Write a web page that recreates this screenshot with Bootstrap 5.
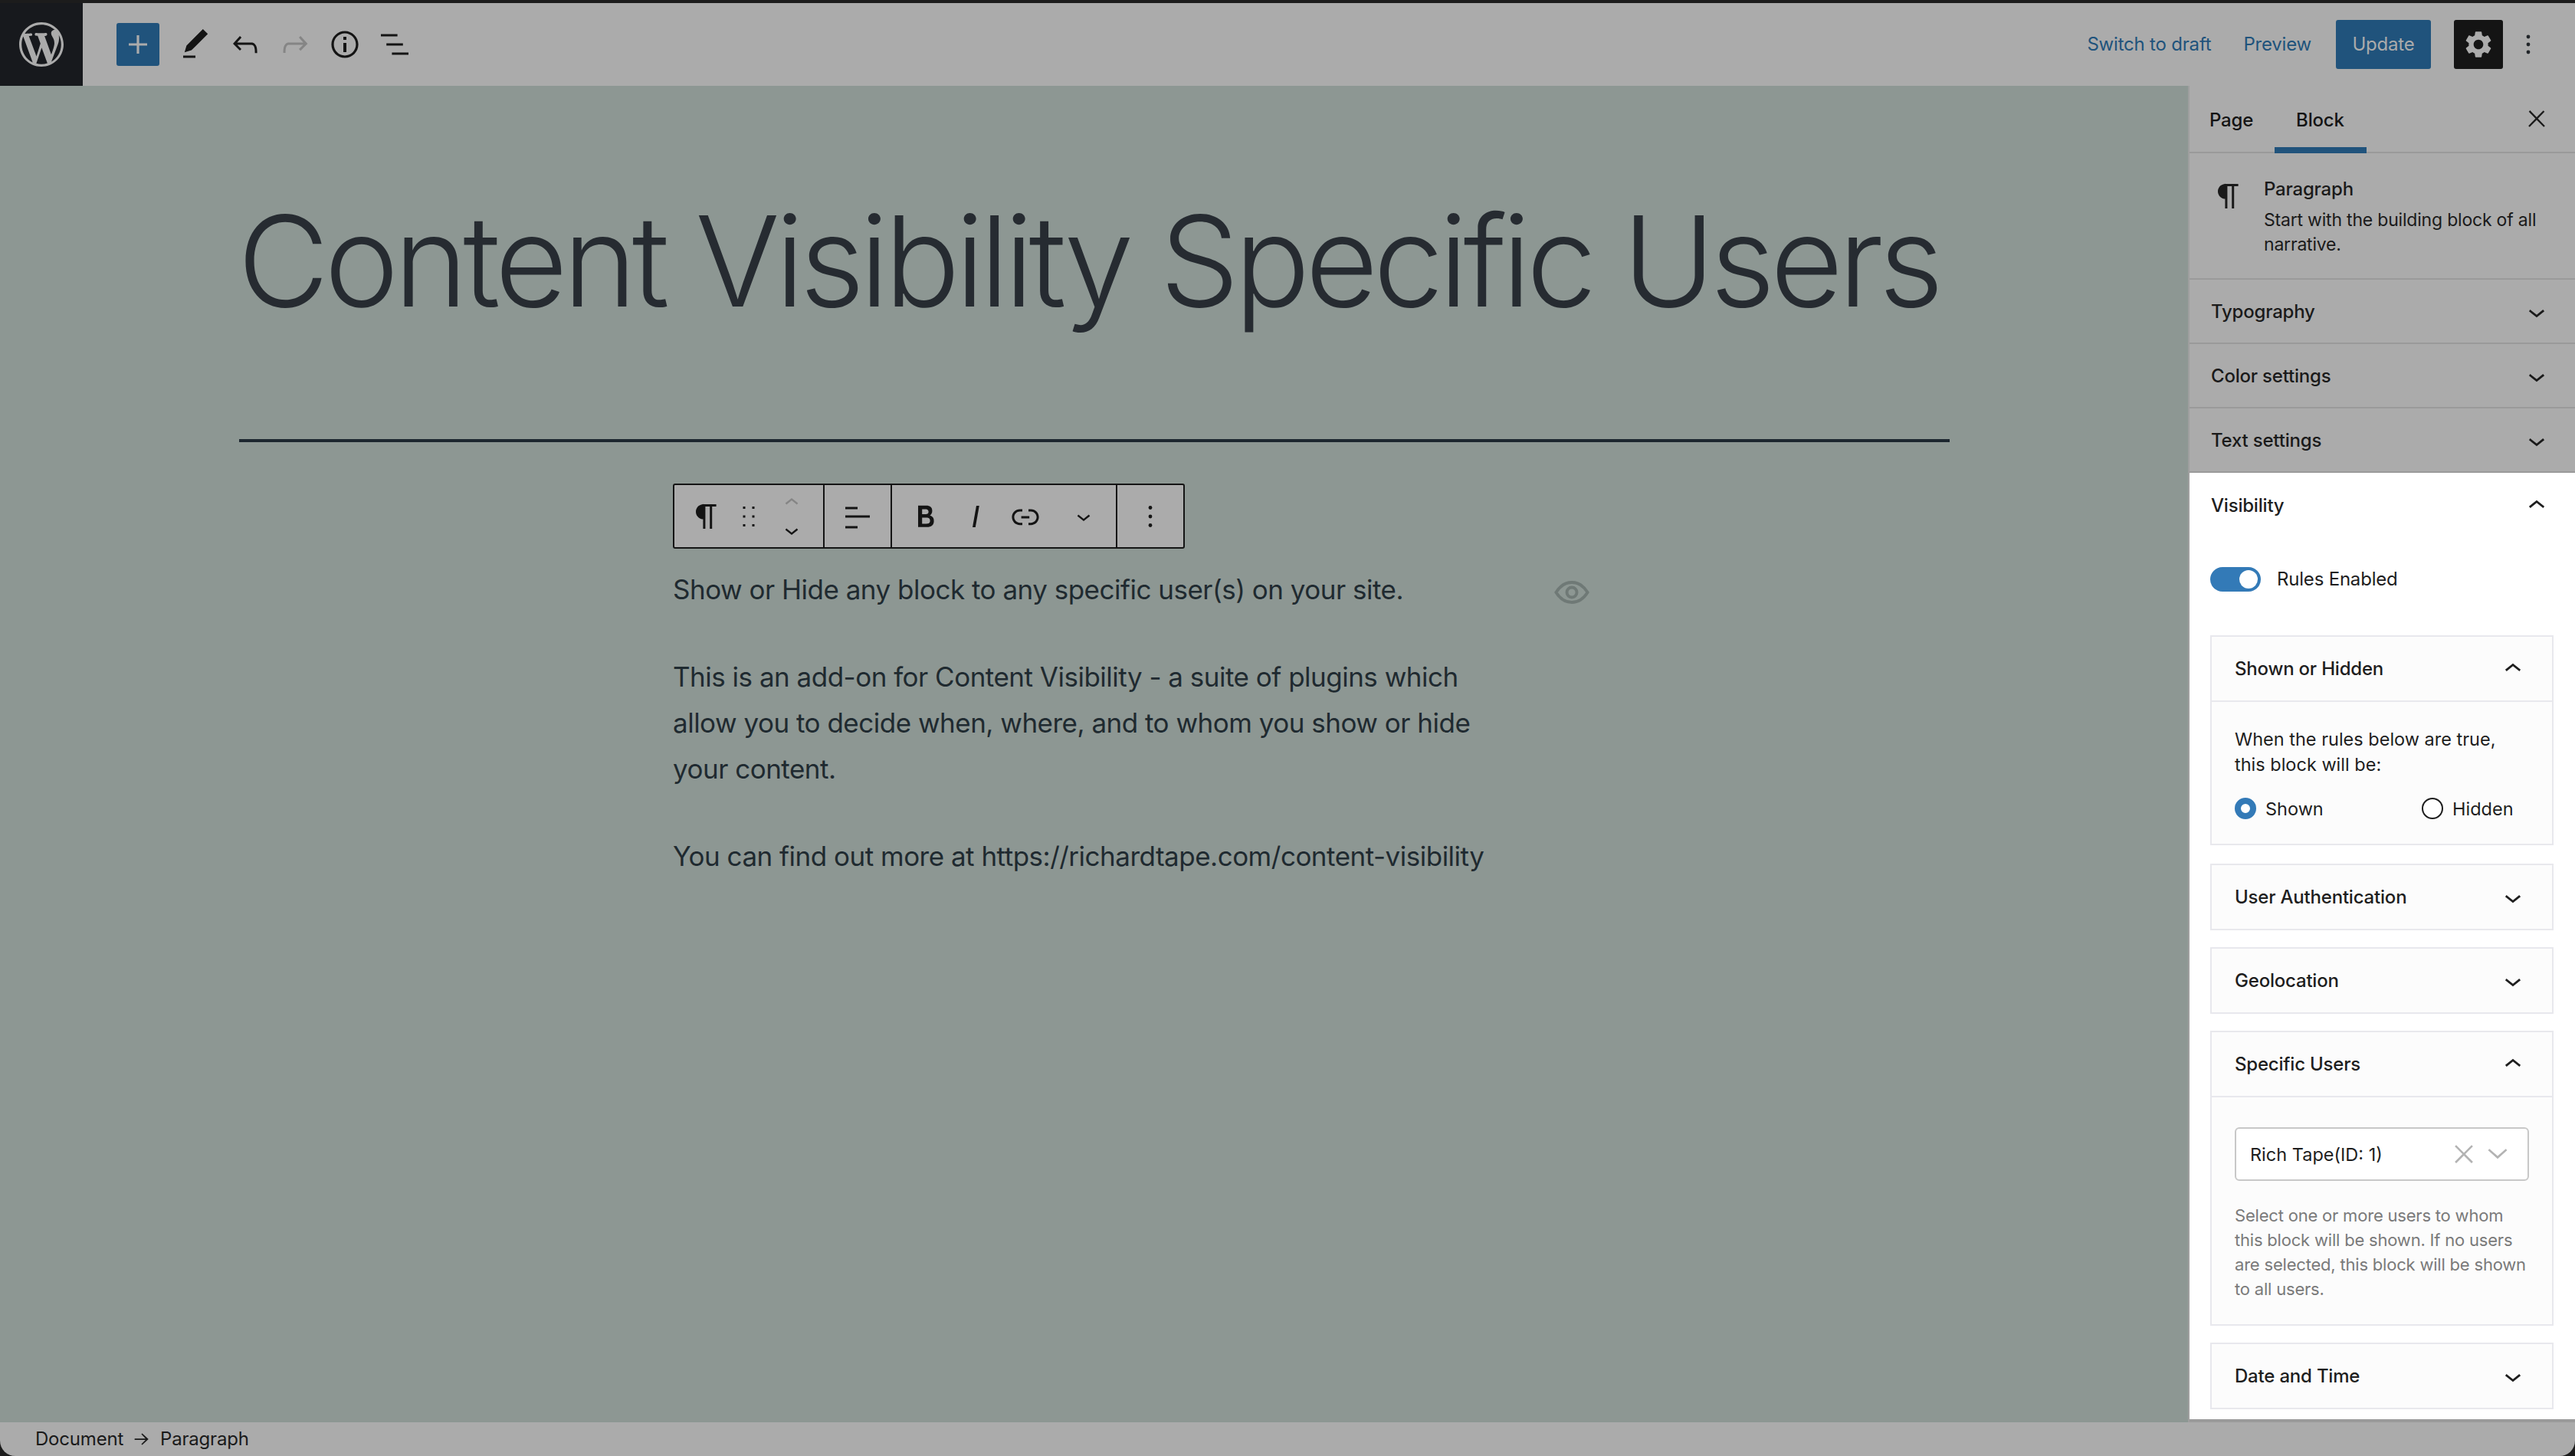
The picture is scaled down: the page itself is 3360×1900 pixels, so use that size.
<!DOCTYPE html>
<html lang="en">
<head>
  <meta charset="UTF-8">
  <meta name="viewport" content="width=device-width, initial-scale=1.0">
  <title>Content Visibility Specific Users</title>
  <link href="https://cdn.jsdelivr.net/npm/bootstrap@5.3.0/dist/css/bootstrap.min.css" rel="stylesheet">
  <style>
    html, body { height: 100%; }
    body { background: #000; font-family: Inter, "Liberation Sans", sans-serif; color: #1a1a1a; overflow: hidden; }
    svg { fill: currentColor; display: block; flex: none; }

    .wp-frame { height: 1900px; padding-top: 4px; background: #1c1c1c; }
    .wp-shell { height: 1896px; background: #ababab; border-radius: 0 0 20px 20px; overflow: hidden; }

    .wp-topbar { height: 108px; background: #ababab; }
    .wp-logo { width: 108px; height: 108px; background: #17191d; color: #ababab; }
    .wp-tools { padding-left: 44px; gap: 9px; color: #141414; }
    .wp-tool { width: 56px; height: 56px; }
    .wp-tool.off { color: #858585; }
    .wp-inserter { background: #20537c; color: #ababab; border-radius: 3px; margin-right: 10px; }
    .wp-actions { padding-right: 37px; font-size: 24px; letter-spacing: -.2px; }
    .wp-link { color: #20537c; text-decoration: none; margin-right: 42px; }
    .wp-link:last-of-type { margin-right: 32px; }
    .wp-update { background: #20537c; color: #ababab; border: 0; border-radius: 3px; font-size: 24px; letter-spacing: -.2px; width: 124px; height: 64px; padding: 0; margin-right: 30px; }
    .wp-update:hover { background: #20537c; color: #ababab; }
    .wp-cog { width: 64px; height: 64px; background: #141414; color: #ababab; border-radius: 3px; margin-right: 9px; }

    .wp-body { height: 1744px; }
    .wp-canvas { background: #8d9793; position: relative; padding-top: 147px; }
    .wp-title { margin: 0 0 0 310px; font-size: 164px; line-height: 1; font-weight: 300; color: #262b31; letter-spacing: -6.25px; white-space: nowrap; }
    .wp-sep { margin: 150px 0 0 312px; width: 2232px; height: 4px; background: #1d2730; opacity: 1; border: 0; }
    .wp-column { margin: 54px 0 0 878px; width: 1100px; }

    .wp-bar { width: 668px; height: 85px; background: #ababab; border: 2px solid #141414; border-radius: 3px; color: #141414; }
    .wp-group { height: 100%; border-right: 2px solid #141414; }
    .wp-group:last-child { border-right: 0; }
    .wp-mover { color: #141414; line-height: 0; }
    .wp-mover .off { color: #858585; }

    .wp-copy { font-size: 35px; letter-spacing: -.5px; line-height: 60px; color: #1f2a30; position: relative; margin-top: 23px; }
    .wp-copy p { margin: 0 0 54px; }
    .wp-eye { position: absolute; left: 1147px; top: 8px; color: #6f7976; }

    .wp-side { width: 505px; flex: none; border-left: 2px solid #9f9f9f; background: #ababab; height: 1744px; overflow: hidden; letter-spacing: -.2px; }
    .wp-tabs { height: 88px; border-bottom: 2px solid #9a9a9a; padding-left: 26px; padding-right: 37px; font-size: 24px; font-weight: 500; }
    .wp-tab { height: 86px; color: #141414; padding: 4px 0 0; text-decoration: none; margin-right: 56px; position: relative; line-height: 1; }
    .wp-tab.on::after { content: ""; position: absolute; left: -28px; right: -29px; bottom: -2px; height: 8px; background: #20537c; }
    .wp-blockcard { height: 165px; padding: 32px 20px 0 27px; border-bottom: 2px solid #9a9a9a; font-size: 23px; line-height: 32px; }
    .wp-blockcard > svg { margin-right: 22px; }
    .wp-blockcard h2 { font-size: 24px; font-weight: 500; margin: 0 0 9px; line-height: 30px; }
    .wp-blockcard p { margin: 0; }
    .wp-row { height: 84px; padding: 2px 28px 0 28px; border-bottom: 2px solid #9a9a9a; font-size: 24px; font-weight: 500; }

    .wp-panel { background: #fff; padding-bottom: 13px; border-bottom: 6px solid #9a9a9a; }
    .wp-panelhead { height: 86px; padding: 0 28px 0 28px; font-size: 24px; font-weight: 500; color: #1e1e1e; }
    .wp-rule { padding: 0 0 0 27px; margin-top: 36px; height: 34px; font-size: 24px; color: #1e1e1e; }
    .form-switch .wp-toggle { width: 66px; height: 32px; margin: 0; background-color: #337ab7; border: 0; }
    .wp-rule label { margin-left: 21px; }
    .wp-boxes { padding: 0 28px 0 27px; margin-top: 56px; }
    .wp-box { border: 2px solid #e8e8ed; background: #fcfcfc; border-radius: 0; margin-bottom: 22px; }
    .wp-box.first { margin-bottom: 24px; }
    .wp-box:last-child { margin-bottom: 0; }
    .wp-boxhead { height: 83px; padding: 0 29px 0 30px; font-size: 24px; font-weight: 500; color: #1e1e1e; }
    .wp-boxhead.open { height: 85px; border-bottom: 2px solid #e8e8ed; }
    .wp-boxbody { padding: 32px 30px 0; font-size: 23.5px; letter-spacing: 0; line-height: 33px; color: #1e1e1e; }
    .wp-boxbody p { margin: 0; }
    .wp-boxbody .wp-rulenote { max-width: 350px; }
    .wp-radios { margin-top: 27px; height: 60px; }
    .wp-radios > div { height: 28px; gap: 12px; }
    .wp-radio { width: 28px; height: 28px; margin: 0; border: 2px solid #1e1e1e; background: #fff; }
    .wp-radio:checked { background: #fff; border: 8px solid #337ab7; }
    .wp-select { height: 70px; border: 2px solid #c8c8c8; border-radius: 6px; background: #fff; padding: 0 24px 0 18px; margin-top: 7px; color: #1e1e1e; }
    .wp-boxbody .wp-help { color: #7a7a7a; font-size: 22px; letter-spacing: -.2px; line-height: 32px; margin-top: 29px; padding-bottom: 30px; }
    .wp-selicons { color: #b3b3b3; gap: 14px; }

    .wp-foot { height: 44px; padding-left: 46px; font-size: 24px; letter-spacing: -.2px; color: #1a1a1a; gap: 10px; }
  </style>
</head>
<body>
  <div class="wp-frame">
    <div class="wp-shell d-flex flex-column">

      <!-- top bar -->
      <header class="wp-topbar d-flex align-items-center justify-content-between">
        <div class="d-flex align-items-center">
          <a class="wp-logo d-flex align-items-center justify-content-center">
            <svg width="58" height="58" viewBox="0 0 20 20"><path d="M20 10c0-5.51-4.49-10-10-10C4.48 0 0 4.49 0 10c0 5.52 4.48 10 10 10 5.51 0 10-4.48 10-10zM7.78 15.37L4.37 6.22c.55-.02 1.17-.08 1.17-.08.5-.06.44-1.13-.06-1.11 0 0-1.45.11-2.37.11-.18 0-.37 0-.58-.01C4.12 2.69 6.87 1.11 10 1.11c2.33 0 4.45.87 6.05 2.34-.68-.11-1.65.39-1.65 1.58 0 .74.45 1.36.9 2.1.35.61.55 1.36.55 2.46 0 1.49-1.4 5-1.4 5l-3.03-8.37c.54-.02.82-.17.82-.17.5-.05.44-1.25-.06-1.22 0 0-1.44.12-2.38.12-.87 0-2.33-.12-2.33-.12-.5-.03-.56 1.2-.06 1.22l.92.08 1.26 3.41zM17.41 10c.24-.64.74-1.87.43-4.25.7 1.29 1.05 2.71 1.05 4.25 0 3.29-1.73 6.24-4.4 7.78.97-2.59 1.94-5.2 2.92-7.78zM6.1 18.09C3.12 16.65 1.11 13.53 1.11 10c0-1.3.23-2.48.72-3.59C3.25 10.3 4.67 14.2 6.1 18.09zm4.03-6.63l2.58 6.98c-.86.29-1.76.45-2.71.45-.79 0-1.57-.11-2.29-.33.81-2.38 1.62-4.74 2.42-7.1z"/></svg>
          </a>
          <div class="wp-tools d-flex align-items-center">
            <span class="wp-tool wp-inserter d-flex align-items-center justify-content-center"><svg width="48" height="48" viewBox="0 0 24 24"><path d="M18 11.2h-5.2V6h-1.6v5.2H6v1.6h5.2V18h1.6v-5.2H18z"/></svg></span>
            <span class="wp-tool d-flex align-items-center justify-content-center"><svg width="48" height="48" viewBox="0 0 24 24"><path d="M20.1 5.1L16.9 2 6.2 12.7l-1.3 4.4 4.5-1.3L20.1 5.1zM4 20.8h8v-1.5H4v1.5z"/></svg></span>
            <span class="wp-tool d-flex align-items-center justify-content-center"><svg width="48" height="48" viewBox="0 0 24 24"><path d="M18.3 11.7c-.6-.6-1.4-.9-2.3-.9H6.7l2.9-3.3-1.1-1-4.5 5L8.5 16l1-1-2.7-2.7H16c.5 0 .9.2 1.3.5 1 1 1 3.4 1 4.5v.3h1.5v-.2c0-1.5 0-4.3-1.5-5.7z"/></svg></span>
            <span class="wp-tool off d-flex align-items-center justify-content-center"><svg width="48" height="48" viewBox="0 0 24 24"><path d="M15.6 6.5l-1.1 1 2.9 3.3H8c-.9 0-1.7.3-2.3.9-1.4 1.5-1.4 4.2-1.4 5.6v.2h1.5v-.3c0-1.1 0-3.5 1-4.5.3-.3.7-.5 1.3-.5h9.2L14.5 15l1.1 1.1 4.6-4.6-4.6-5z"/></svg></span>
            <span class="wp-tool d-flex align-items-center justify-content-center"><svg width="48" height="48" viewBox="0 0 24 24"><path d="M12 3.2c-4.8 0-8.8 3.9-8.8 8.8 0 4.8 3.9 8.8 8.8 8.8 4.8 0 8.8-3.9 8.8-8.8 0-4.8-4-8.8-8.8-8.8zm0 16c-4 0-7.2-3.3-7.2-7.2C4.8 8 8 4.8 12 4.8s7.2 3.3 7.2 7.2c0 4-3.2 7.2-7.2 7.2zM11 17h2v-6h-2v6zm0-8h2V7h-2v2z"/></svg></span>
            <span class="wp-tool d-flex align-items-center justify-content-center"><svg width="48" height="48" viewBox="0 0 24 24"><path d="M13.8 5.2H3v1.500h10.800V5.200zm-3.600 12v1.500H21v-1.500H10.200zm7.200-6H6.600v1.500h10.800v-1.500z"/></svg></span>
          </div>
        </div>
        <div class="wp-actions d-flex align-items-center">
          <a class="wp-link" href="#">Switch to draft</a>
          <a class="wp-link" href="#">Preview</a>
          <button class="btn wp-update">Update</button>
          <span class="wp-cog d-flex align-items-center justify-content-center"><svg width="42" height="42" viewBox="0 0 24 24"><path d="M19.14 12.94c.04-.3.06-.61.06-.94 0-.32-.02-.64-.07-.94l2.03-1.58a.49.49 0 0 0 .12-.61l-1.92-3.32a.488.488 0 0 0-.59-.22l-2.39.96c-.5-.38-1.03-.7-1.62-.94l-.36-2.54a.484.484 0 0 0-.48-.41h-3.84c-.24 0-.43.17-.47.41l-.36 2.54c-.59.24-1.13.57-1.62.94l-2.39-.96c-.22-.08-.47 0-.59.22L2.74 8.87c-.12.21-.08.47.12.61l2.03 1.58c-.05.3-.09.63-.09.94s.02.64.07.94l-2.03 1.58a.49.49 0 0 0-.12.61l1.92 3.32c.12.22.37.29.59.22l2.39-.96c.5.38 1.03.7 1.62.94l.36 2.54c.05.24.24.41.48.41h3.84c.24 0 .44-.17.47-.41l.36-2.54c.59-.24 1.13-.56 1.62-.94l2.39.96c.22.08.47 0 .59-.22l1.92-3.32c.12-.22.07-.47-.12-.61l-2.01-1.58zM12 15.6c-1.98 0-3.6-1.62-3.6-3.6s1.62-3.6 3.6-3.6 3.6 1.62 3.6 3.6-1.62 3.6-3.6 3.6z"/></svg></span>
          <svg width="48" height="48" viewBox="0 0 24 24" class="text-dark"><circle cx="12" cy="7" r="1.2"/><circle cx="12" cy="12" r="1.2"/><circle cx="12" cy="17" r="1.2"/></svg>
        </div>
      </header>

      <div class="wp-body d-flex">
        <!-- editor canvas -->
        <main class="wp-canvas flex-grow-1">
          <h1 class="wp-title">Content Visibility Specific Users</h1>
          <hr class="wp-sep">
          <div class="wp-column">
            <div class="wp-bar d-flex align-items-center">
              <div class="wp-group d-flex align-items-center" style="width:196px">
                <span class="d-flex justify-content-center" style="width:84px"><svg width="48" height="48" viewBox="0 0 24 24"><path d="M18.3 4H9.9v-.1l-.9.2c-2.3.4-4 2.4-4 4.8s1.7 4.4 4 4.8l.7.1V20h1.5V5.5h2.9V20h1.5V5.5h2.7V4z"/></svg></span>
                <span class="d-flex justify-content-center" style="width:28px"><svg width="48" height="48" viewBox="0 0 24 24"><path d="M8.250 5.500h1.500V7h-1.500zM14.250 5.500h1.500V7h-1.500zM8.250 11.250h1.500v1.500h-1.500zM14.250 11.250h1.500v1.500h-1.500zM8.250 17h1.500v1.500h-1.500zM14.250 17h1.500v1.500h-1.500z"/></svg></span>
                <span class="wp-mover d-flex flex-column align-items-center" style="width:84px">
                  <svg class="off" width="36" height="36" viewBox="0 0 24 24"><path d="M6.5 12.4L12 8l5.5 4.4-.9 1.2L12 10l-4.500 3.600-1-1.200z"/></svg>
                  <svg width="36" height="36" viewBox="0 0 24 24"><path d="M17.5 11.6L12 16l-5.500-4.400.9-1.200L12 14l4.500-3.600 1 1.200z"/></svg>
                </span>
              </div>
              <div class="wp-group d-flex align-items-center justify-content-center" style="width:88px">
                <svg width="48" height="48" viewBox="0 0 24 24"><path d="M4 19.800h8v-1.500H4v1.500zM4 5.700v1.500h8V5.700H4zM4 12.800h16v-1.500H4z"/></svg>
              </div>
              <div class="wp-group d-flex align-items-center" style="width:294px">
                <span class="d-flex justify-content-center" style="width:80px;margin-left:4px"><svg width="48" height="48" viewBox="0 0 24 24"><path d="M14.7 11.3c1-.6 1.5-1.6 1.5-3 0-2.3-1.3-3.4-4-3.4H7v14h5.8c1.4 0 2.5-.3 3.3-1 .8-.7 1.2-1.7 1.2-2.9.1-1.9-.8-3.1-2.6-3.7zm-5.1-4h2.3c.6 0 1.1.1 1.4.4.3.3.5.7.5 1.2s-.2 1-.5 1.2c-.3.3-.8.4-1.4.4H9.6V7.3zm4.6 9c-.4.3-1 .4-1.7.4H9.6v-3.9h2.9c.7 0 1.3.2 1.7.5.4.3.6.8.6 1.5s-.2 1.2-.6 1.5z"/></svg></span>
                <span class="d-flex justify-content-center" style="width:50px"><svg width="48" height="48" viewBox="0 0 24 24"><path d="M12.5 5L10 19h1.900l2.500-14z"/></svg></span>
                <span class="d-flex justify-content-center" style="width:80px"><svg width="48" height="48" viewBox="0 0 24 24"><path d="M15.6 7.2H14v1.5h1.6c2 0 3.7 1.7 3.7 3.7s-1.7 3.7-3.7 3.7H14v1.5h1.6c2.8 0 5.2-2.3 5.2-5.2 0-2.9-2.3-5.2-5.2-5.2zM4.7 12.4c0-2 1.7-3.7 3.7-3.7H10V7.2H8.400c-2.900 0-5.200 2.300-5.200 5.200 0 2.900 2.300 5.200 5.200 5.200H10v-1.500H8.400c-2 0-3.700-1.700-3.700-3.700zm4.600.900h5.300v-1.500H9.300v1.500z"/></svg></span>
                <span class="d-flex justify-content-center" style="width:72px"><svg width="36" height="36" viewBox="0 0 24 24"><path d="M17.5 11.6L12 16l-5.500-4.400.9-1.200L12 14l4.500-3.600 1 1.200z"/></svg></span>
              </div>
              <div class="wp-group d-flex align-items-center justify-content-center flex-grow-1">
                <svg width="48" height="48" viewBox="0 0 24 24"><circle cx="12" cy="6.250" r="1.200"/><circle cx="12" cy="12" r="1.200"/><circle cx="12" cy="17.750" r="1.200"/></svg>
              </div>
            </div>
            <div class="wp-copy">
              <p>Show or Hide any block to any specific user(s) on your site.</p>
              <svg class="wp-eye" width="52" height="52" viewBox="0 0 24 24"><path fill="none" stroke="currentColor" stroke-width="1.800" d="M2.500 12C5 8 8.200 6 12 6s7 2 9.500 6c-2.500 4-5.700 6-9.500 6s-7-2-9.500-6z"/><circle cx="12" cy="12" r="3" fill="none" stroke="currentColor" stroke-width="1.800"/></svg>
              <p>This is an add-on for Content Visibility - a suite of plugins which allow you to decide when, where, and to whom you show or hide your content.</p>
              <p>You can find out more at https://richardtape.com/content-visibility</p>
            </div>
          </div>
        </main>

        <!-- settings sidebar -->
        <aside class="wp-side">
          <div class="wp-tabs d-flex align-items-center">
            <a class="wp-tab d-flex align-items-center" href="#">Page</a>
            <a class="wp-tab on d-flex align-items-center" href="#">Block</a>
            <svg class="ms-auto" width="26" height="26" viewBox="0 0 24 24"><path d="M13.500 11.800l8-8.300-1.500-1.500-8 8.200L4 1.900 2.500 3.400l8 8.400-8.500 8.700 1.500 1.500 8.500-8.600 8.500 8.600 1.500-1.500z"/></svg>
          </div>
          <div class="wp-blockcard d-flex">
            <svg width="48" height="48" viewBox="0 0 24 24"><path d="M18.300 4H9.900v-.1l-.9.200c-2.300.4-4 2.400-4 4.800s1.700 4.400 4 4.800l.7.100V20h1.500V5.500h2.900V20h1.500V5.500h2.700V4z"/></svg>
            <div>
              <h2>Paragraph</h2>
              <p>Start with the building block of all narrative.</p>
            </div>
          </div>
          <div class="wp-row d-flex align-items-center justify-content-between">Typography <svg width="44" height="44" viewBox="0 0 24 24"><path d="M17.500 11.600L12 16l-5.500-4.400.9-1.200L12 14l4.500-3.600 1 1.200z"/></svg></div>
          <div class="wp-row d-flex align-items-center justify-content-between">Color settings <svg width="44" height="44" viewBox="0 0 24 24"><path d="M17.500 11.600L12 16l-5.500-4.400.9-1.200L12 14l4.500-3.600 1 1.200z"/></svg></div>
          <div class="wp-row d-flex align-items-center justify-content-between">Text settings <svg width="44" height="44" viewBox="0 0 24 24"><path d="M17.500 11.600L12 16l-5.500-4.400.9-1.200L12 14l4.500-3.600 1 1.200z"/></svg></div>

          <section class="wp-panel">
            <div class="wp-panelhead d-flex align-items-center justify-content-between">Visibility <svg width="44" height="44" viewBox="0 0 24 24"><path d="M6.500 12.400L12 8l5.500 4.400-.9 1.200L12 10l-4.500 3.600-1-1.200z"/></svg></div>
            <div class="wp-rule form-check form-switch d-flex align-items-center">
              <input class="form-check-input wp-toggle" type="checkbox" role="switch" id="rulesOn" checked>
              <label for="rulesOn">Rules Enabled</label>
            </div>
            <div class="wp-boxes">
              <div class="card wp-box first">
                <div class="wp-boxhead open d-flex align-items-center justify-content-between">Shown or Hidden <svg width="44" height="44" viewBox="0 0 24 24"><path d="M6.500 12.400L12 8l5.500 4.400-.9 1.200L12 10l-4.500 3.600-1-1.200z"/></svg></div>
                <div class="wp-boxbody">
                  <p class="wp-rulenote">When the rules below are true, this block will be:</p>
                  <div class="wp-radios d-flex">
                    <div class="d-flex align-items-center" style="width:244px"><input class="form-check-input wp-radio" type="radio" name="shown" id="rShown" checked> <label for="rShown">Shown</label></div>
                    <div class="d-flex align-items-center"><input class="form-check-input wp-radio" type="radio" name="shown" id="rHidden"> <label for="rHidden">Hidden</label></div>
                  </div>
                </div>
              </div>
              <div class="card wp-box"><div class="wp-boxhead d-flex align-items-center justify-content-between">User Authentication <svg width="44" height="44" viewBox="0 0 24 24"><path d="M17.500 11.600L12 16l-5.500-4.400.9-1.200L12 14l4.500-3.600 1 1.200z"/></svg></div></div>
              <div class="card wp-box"><div class="wp-boxhead d-flex align-items-center justify-content-between">Geolocation <svg width="44" height="44" viewBox="0 0 24 24"><path d="M17.500 11.600L12 16l-5.500-4.400.9-1.200L12 14l4.500-3.600 1 1.200z"/></svg></div></div>
              <div class="card wp-box">
                <div class="wp-boxhead open d-flex align-items-center justify-content-between">Specific Users <svg width="44" height="44" viewBox="0 0 24 24"><path d="M6.500 12.400L12 8l5.500 4.400-.9 1.200L12 10l-4.500 3.600-1-1.200z"/></svg></div>
                <div class="wp-boxbody">
                  <div class="wp-select d-flex align-items-center justify-content-between">
                    <span>Rich Tape(ID: 1)</span>
                    <span class="wp-selicons d-flex align-items-center">
                      <svg width="30" height="30" viewBox="0 0 24 24"><path d="M4 2.500l8 8 8-8 1.500 1.500-8 8 8 8-1.500 1.500-8-8-8 8L2.500 20l8-8-8-8z"/></svg>
                      <svg width="30" height="30" viewBox="0 0 24 24"><path d="M12 17L2 8l1.500-1.500L12 14l8.500-7.500L22 8z"/></svg>
                    </span>
                  </div>
                  <p class="wp-help">Select one or more users to whom this block will be shown. If no users are selected, this block will be shown to all users.</p>
                </div>
              </div>
              <div class="card wp-box"><div class="wp-boxhead d-flex align-items-center justify-content-between">Date and Time <svg width="44" height="44" viewBox="0 0 24 24"><path d="M17.500 11.600L12 16l-5.500-4.400.9-1.200L12 14l4.500-3.600 1 1.200z"/></svg></div></div>
            </div>
          </section>
        </aside>
      </div>

      <!-- breadcrumb bar -->
      <footer class="wp-foot d-flex align-items-center">
        <span>Document</span>
        <svg width="28" height="28" viewBox="0 0 24 24"><path d="M12.500 5.500l-1 1 4.700 4.800H4v1.500h12.200l-4.700 4.700 1 1L19.500 12z"/></svg>
        <span>Paragraph</span>
      </footer>
    </div>
  </div>
</body>
</html>
